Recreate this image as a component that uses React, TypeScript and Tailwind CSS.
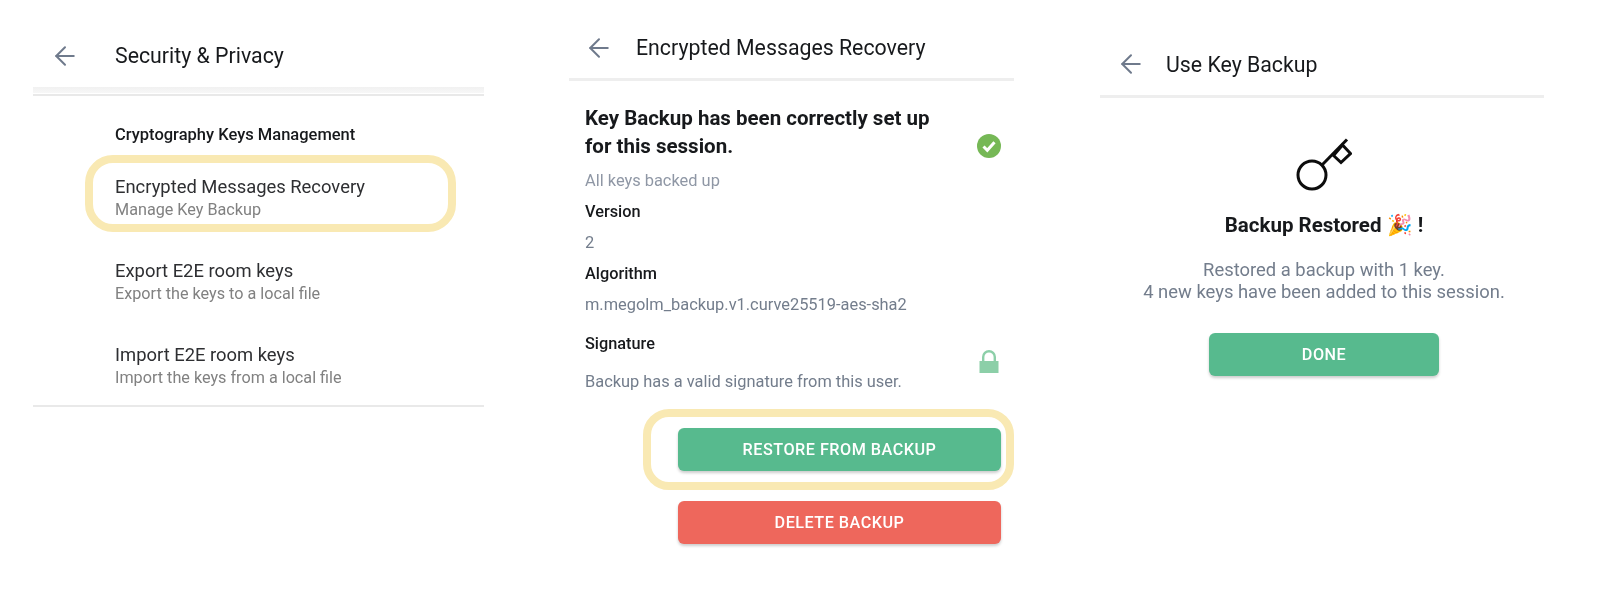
import { ArrowLeft } from "lucide-react";

const font = "font-['Roboto',sans-serif]";

function Header({ title, titleGap }: { title: string; titleGap: string }) {
  return (
    <div className="flex h-[46px] items-center">
      <ArrowLeft size={30} strokeWidth={1.6} className="text-[#6f7a8c]" />
      <h1 className={`text-[21.3px] text-[#17191c] ${titleGap}`}>{title}</h1>
    </div>
  );
}

function SettingRow({ title, sub }: { title: string; sub: string }) {
  return (
    <div>
      <div className="text-[18.4px] leading-[25px] text-[#2e2f32]">{title}</div>
      <div className="mt-[1px] text-[16.2px] leading-[20px] text-[#818181]">{sub}</div>
    </div>
  );
}

function Field({ label, value, gap }: { label: string; value: string; gap: string }) {
  return (
    <div>
      <div className={`text-[16.3px] leading-[20px] font-medium text-[#17191c] ${gap}`}>{label}</div>
      <div className="text-[16.4px] leading-[20px] text-[#737d8c]">{value}</div>
    </div>
  );
}

function ActionButton({ label, color }: { label: string; color: string }) {
  return (
    <button
      className={`h-[43px] w-full rounded-[6px] pt-[2px] text-[16.2px] font-medium tracking-[0.5px] text-white shadow-[0_2px_3px_rgba(0,0,0,0.2)] ${color}`}
    >
      {label}
    </button>
  );
}

function CheckBadge() {
  return (
    <svg width="24" height="24" viewBox="0 0 24 24">
      <circle cx="12" cy="12" r="12" fill="#76b856" />
      <path d="M6.5 12.5l3.8 3.8 7.2-8" fill="none" stroke="#fff" strokeWidth="3" />
    </svg>
  );
}

function LockIcon() {
  return (
    <svg width="20" height="23" viewBox="0 0 20 23">
      <path d="M4.2 12V7a5.8 5.8 0 0 1 11.6 0v5" fill="none" stroke="#8ccfa8" strokeWidth="2.4" />
      <rect x="0.5" y="11" width="19" height="12" fill="#8ccfa8" />
    </svg>
  );
}

function KeyIcon() {
  return (
    <svg width="56" height="54" viewBox="0 0 56 54" fill="none" stroke="#0d0d0d" strokeWidth="3">
      <circle cx="16" cy="37" r="14" />
      <path d="M26.5 26.5L51 1.5" />
      <path d="M37.5 17.5L46.5 7l8 8.5-9.5 9z" />
    </svg>
  );
}

export default function App() {
  return (
    <div className={`flex h-[604px] w-[1600px] items-start overflow-hidden bg-white blur-[0.4px] ${font}`}>
      {/* Security & Privacy */}
      <section className="ml-[33px] w-[451px] pt-[33px]">
        <div className="pl-[17px]">
          <Header title="Security & Privacy" titleGap="ml-[35px]" />
        </div>
        <div className="mt-[8px] h-[6px] bg-gradient-to-b from-[#f1f1f1] to-[#f7f7f7]" />
        <div className="mt-[1px] h-[2px] bg-[#e9e9e9]" />
        <div className="pl-[82px] pt-[29px]">
          <h2 className="text-[16.5px] leading-[20px] font-medium text-[#17191c]">Cryptography Keys Management</h2>
          <div className="mt-[10px] -ml-[30px] w-[371px] rounded-[28px] border-[8px] border-[#f9e9b3] pt-[11px] pb-[4px] pl-[22px]">
            <SettingRow title="Encrypted Messages Recovery" sub="Manage Key Backup" />
          </div>
          <div className="mt-[26px]">
            <SettingRow title="Export E2E room keys" sub="Export the keys to a local file" />
          </div>
          <div className="mt-[38px]">
            <SettingRow title="Import E2E room keys" sub="Import the keys from a local file" />
          </div>
        </div>
        <div className="mt-[17px] h-[2px] bg-[#e9e9e9]" />
      </section>

      {/* Encrypted Messages Recovery */}
      <section className="ml-[85px] w-[445px] pt-[25px]">
        <div className="pl-[15px]">
          <Header title="Encrypted Messages Recovery" titleGap="ml-[22px]" />
        </div>
        <div className="mt-[7px] h-[3px] bg-[#eeeeee]" />
        <div className="pl-[16px] pr-[13px] pt-[23px]">
          <div className="flex items-end justify-between">
            <h2 className="w-[365px] text-[20.5px] leading-[28px] font-bold text-[#17191c]">
              Key Backup has been correctly set up for this session.
            </h2>
            <div className="mb-[2px]">
              <CheckBadge />
            </div>
          </div>
          <div className="mt-[11px] text-[16.4px] leading-[20px] text-[#8f97a5]">All keys backed up</div>
          <Field label="Version" value="2" gap="mt-[11px] mb-[11px]" />
          <Field label="Algorithm" value="m.megolm_backup.v1.curve25519-aes-sha2" gap="mt-[11px] mb-[11px]" />
          <div className="mt-[19px] flex items-end justify-between">
            <div>
              <div className="mb-[18px] text-[16.3px] leading-[20px] font-medium text-[#17191c]">Signature</div>
              <div className="text-[16.4px] leading-[20px] text-[#737d8c]">Backup has a valid signature from this user.</div>
            </div>
            <div className="mb-[19px] mr-[2px]">
              <LockIcon />
            </div>
          </div>
        </div>
        <div className="mt-[17px] ml-[74px] rounded-[26px] border-[8px] border-[#f9e9b3] py-[11px] pl-[27px] pr-[5px]">
          <ActionButton label="RESTORE FROM BACKUP" color="bg-[#57ba8e]" />
        </div>
        <div className="mt-[11px] ml-[109px] mr-[13px]">
          <ActionButton label="DELETE BACKUP" color="bg-[#ee675c]" />
        </div>
      </section>

      {/* Use Key Backup */}
      <section className="ml-[86px] w-[444px] pt-[41px]">
        <div className="pl-[16px]">
          <Header title="Use Key Backup" titleGap="ml-[20px] pt-[1px]" />
        </div>
        <div className="mt-[8px] h-[3px] bg-[#eeeeee]" />
        <div className="flex flex-col items-center pl-[4px] pt-[40px]">
          <KeyIcon />
          <h2 className="mt-[20px] text-[20.5px] leading-[26px] font-bold text-[#17191c]">Backup Restored 🎉 !</h2>
          <p className="mt-[21px] text-center text-[18.4px] leading-[22px] text-[#737d8c]">
            Restored a backup with 1 key.
            <br />4 new keys have been added to this session.
          </p>
          <div className="mt-[30px] w-[230px]">
            <ActionButton label="DONE" color="bg-[#57ba8e]" />
          </div>
        </div>
      </section>
    </div>
  );
}
